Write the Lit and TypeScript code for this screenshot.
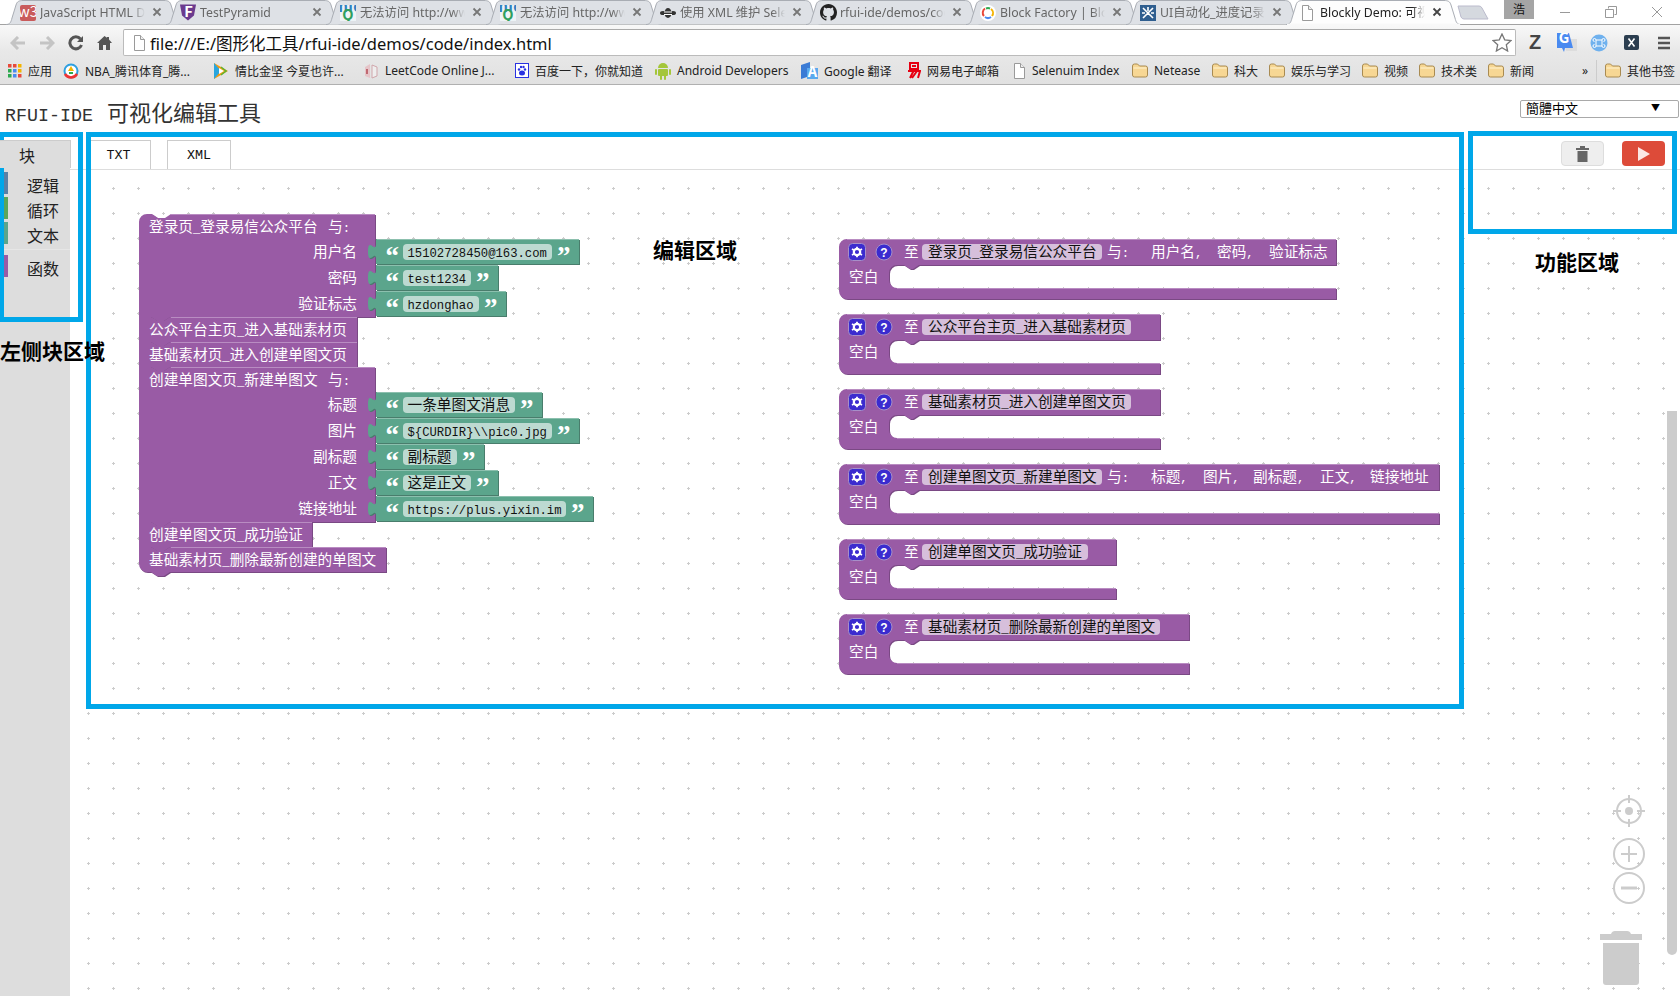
import { LitElement, html, css, svg } from "lit";
import { customElement } from "lit/decorators.js";

const PURPLE = "#995ba5", PURPLE_D = "#7a4984", PURPLE_L = "#b98cc2";
const GREEN = "#5ba58c", GREEN_D = "#497d6c", GREEN_L = "#8cc0ae";

const doc = html`<svg viewBox="0 0 14 16" width="14" height="16"><path d="M2.5.5h6l4 4v11h-10z" fill="#fff" stroke="#9a9a9a"/><path d="M8.5.5v4h4" fill="#eee" stroke="#9a9a9a"/></svg>`;
const folder = html`<svg viewBox="0 0 16 15" width="16" height="15"><path d="M.5 3q0-2 2-2h3l2 2h6q2 0 2 2v7q0 2-2 2h-11q-2 0-2-2z" fill="#f7d794" stroke="#a98b52"/><path d="M1.5 5h13" stroke="#fff3d0"/></svg>`;
const info = html`<svg viewBox="0 0 16 16" width="16" height="16"><rect width="16" height="16" fill="#eef3f6"/><text x="8" y="7" font-size="7" font-weight="700" text-anchor="middle" fill="#2f7fc0" font-family="Liberation Sans">Info</text><text x="8" y="15" font-size="8" font-weight="700" text-anchor="middle" fill="#2f9f5f" font-family="Liberation Sans">Q</text></svg>`;

const tabs = [
  { icon: html`<svg viewBox="0 0 16 16" width="16" height="16"><rect width="16" height="16" rx="2" fill="#c95b5b"/><text x="8" y="12" font-size="10" text-anchor="middle" fill="#fff" font-family="Liberation Sans">w3</text></svg>`, t: "JavaScript HTML DOM" },
  { icon: html`<svg viewBox="0 0 16 16" width="16" height="17"><path d="M0 0h16l-2 11-6 5-6-5z" fill="#6b3a8e"/><text x="8.5" y="12" font-size="12" font-weight="700" text-anchor="middle" fill="#fff" font-family="Liberation Sans">F</text></svg>`, t: "TestPyramid" },
  { icon: info, t: "无法访问 http://www.infoq" },
  { icon: info, t: "无法访问 http://www.infoq" },
  { icon: html`<svg viewBox="0 0 16 16" width="16" height="16"><ellipse cx="8" cy="8" rx="3.5" ry="5" fill="#333"/><ellipse cx="3" cy="8" rx="3" ry="2" fill="#333"/><ellipse cx="13" cy="8" rx="3" ry="2" fill="#333"/><path d="M4 7h8M4 9.5h8" stroke="#fff"/></svg>`, t: "使用 XML 维护 Selenium" },
  { icon: html`<svg viewBox="0 0 16 16" width="17" height="17"><path fill="#222" d="M8 0C3.58 0 0 3.58 0 8c0 3.54 2.29 6.53 5.47 7.59.4.07.55-.17.55-.38 0-.19-.01-.82-.01-1.49-2.01.37-2.53-.49-2.69-.94-.09-.23-.48-.94-.82-1.13-.28-.15-.68-.52-.01-.53.63-.01 1.08.58 1.23.82.72 1.21 1.87.87 2.33.66.07-.52.28-.87.51-1.07-1.78-.2-3.64-.89-3.64-3.95 0-.87.31-1.59.82-2.15-.08-.2-.36-1.02.08-2.12 0 0 .67-.21 2.2.82.64-.18 1.32-.27 2-.27s1.36.09 2 .27c1.53-1.04 2.2-.82 2.2-.82.44 1.1.16 1.92.08 2.12.51.56.82 1.27.82 2.15 0 3.07-1.87 3.75-3.65 3.95.29.25.54.73.54 1.48 0 1.07-.01 1.93-.01 2.2 0 .21.15.46.55.38A8.013 8.013 0 0 0 16 8c0-4.42-3.58-8-8-8z"/></svg>`, t: "rfui-ide/demos/code" },
  { icon: html`<svg viewBox="0 0 16 16" width="16" height="16"><circle cx="8" cy="8" r="8" fill="#fff"/><path d="M5 3.5A5 5 0 0 0 4 11" fill="none" stroke="#e8493a" stroke-width="2"/><path d="M5 12a5 5 0 0 0 6 0" fill="none" stroke="#4a8af0" stroke-width="2"/><path d="M11 4a5 5 0 0 1 1 7" fill="none" stroke="#f4b400" stroke-width="2"/><path d="M6 3.5a5 5 0 0 1 4 0" fill="none" stroke="#2da94f" stroke-width="2"/></svg>`, t: "Block Factory | Blockly" },
  { icon: html`<svg viewBox="0 0 16 16" width="16" height="16"><rect width="16" height="16" fill="#2f5e8f"/><path d="M3 3l10 10M13 3L3 13M8 2v4M2 8h3M11 8h3" stroke="#fff" stroke-width="1.6"/></svg>`, t: "UI自动化_进度记录" },
  { icon: doc, t: "Blockly Demo: 可视化编辑工具", active: true },
];

const bookmarks = [
  { w: 55, t: "应用", icon: html`<svg viewBox="0 0 14 14" width="14" height="14"><g><rect width="3.5" height="3.5" fill="#e8493a"/><rect x="5" width="3.5" height="3.5" fill="#e8493a"/><rect x="10" width="3.5" height="3.5" fill="#f4b400"/><rect y="5" width="3.5" height="3.5" fill="#2da94f"/><rect x="5" y="5" width="3.5" height="3.5" fill="#4a8af0"/><rect x="10" y="5" width="3.5" height="3.5" fill="#f4b400"/><rect y="10" width="3.5" height="3.5" fill="#2da94f"/><rect x="5" y="10" width="3.5" height="3.5" fill="#4a8af0"/><rect x="10" y="10" width="3.5" height="3.5" fill="#e8493a"/></g></svg>` },
  { w: 150, t: "NBA_腾讯体育_腾...", icon: html`<svg viewBox="0 0 16 16" width="16" height="16"><circle cx="8" cy="8" r="6.5" fill="#fff" stroke="#2fa0e0" stroke-width="2"/><path d="M2 11a7 7 0 0 0 12 0" fill="none" stroke="#e33" stroke-width="2.5"/><path d="M5 8l3-5 3 5z" fill="#f4b400"/><path d="M6 10h4" stroke="#2da94f" stroke-width="2"/></svg>` },
  { w: 150, t: "情比金坚 今夏也许...", icon: html`<svg viewBox="0 0 16 18" width="16" height="18"><path d="M1 1l14 8-14 8z" fill="#f39c12"/><path d="M1 1l7 8-7 8z" fill="#2aa6de"/><path d="M6 6l5 3-5 3z" fill="#fff"/><path d="M8 5l5 4-5 4" fill="none" stroke="#5cb531" stroke-width="1.5"/></svg>` },
  { w: 152, t: "LeetCode Online J...", icon: html`<svg viewBox="0 0 16 16" width="16" height="16"><path d="M2 4l5-3v14l-5-2z" fill="#e5c4c8"/><path d="M9 2l5 2v9l-5 2z" fill="#eee" stroke="#d0a6ab"/><path d="M4 6v5" stroke="#b34a55" stroke-width="1.5"/></svg>` },
  { w: 140, t: "百度一下，你就知道", icon: html`<svg viewBox="0 0 14 15" width="14" height="15"><rect x=".5" y=".5" width="13" height="14" fill="#fff" stroke="#2932e1"/><g fill="#2932e1"><ellipse cx="7" cy="10" rx="3" ry="2.5"/><circle cx="4" cy="6.5" r="1.2"/><circle cx="10" cy="6.5" r="1.2"/><circle cx="6" cy="4" r="1.2"/><circle cx="8.5" cy="4" r="1.2"/></g></svg>` },
  { w: 146, t: "Android Developers", icon: html`<svg viewBox="0 0 16 18" width="16" height="18"><g fill="#a4c639"><path d="M3 6a5 5 0 0 1 10 0z"/><rect x="3" y="7" width="10" height="7" rx="1"/><rect y="7" width="2" height="6" rx="1"/><rect x="14" y="7" width="2" height="6" rx="1"/><rect x="5" y="13" width="2" height="5" rx="1"/><rect x="9" y="13" width="2" height="5" rx="1"/></g></svg>` },
  { w: 106, t: "Google 翻译", icon: html`<svg viewBox="0 0 17 17" width="17" height="17"><path d="M0 3l9-3v14l-9 3z" fill="#3a7bd5"/><path d="M6 6h11v11H6z" fill="#5aa9ee"/><text x="11.5" y="15" font-size="10" font-weight="700" text-anchor="middle" fill="#fff" font-family="Liberation Sans">A</text></svg>` },
  { w: 105, t: "网易电子邮箱", icon: html`<svg viewBox="0 0 14 17" width="14" height="17"><path d="M3 1h8v6H3zM5 4h4M1 9h12l-2 7M7 8l-4 8M10 9l-5 7" fill="none" stroke="#e60012" stroke-width="2"/></svg>` },
  { w: 120, t: "Selenuim Index", icon: doc },
  { w: 80, t: "Netease", icon: folder },
  { w: 57, t: "科大", icon: folder },
  { w: 93, t: "娱乐与学习", icon: folder },
  { w: 57, t: "视频", icon: folder },
  { w: 69, t: "技术类", icon: folder },
  { w: 94, t: "新闻", icon: folder },
];

const tools = [
  { t: "逻辑", c: "#5b80a5" },
  { t: "循环", c: "#5ba55b" },
  { t: "文本", c: "#5ba58c" },
];

function txt(s: string, x: number, cy: number, cls: string, anchor = "start") {
  const parts = s.split(/([\x00-\x7f]+)/).filter((p) => p.length);
  return svg`<text x=${x} y=${cy + 5} class=${cls} text-anchor=${anchor}>${parts.map((p) =>
    /^[\x00-\x7f]/.test(p) ? svg`<tspan class="lat">${p}</tspan>` : svg`<tspan>${p}</tspan>`
  )}</text>`;
}

function stmtPath(x: number, y: number, r: number, b: number, hat: boolean, round: boolean) {
  const top = hat
    ? `M${x},${y + 8} a8,8 0 0 1 8,-8 h5 l6,4 h7 l6,-4`
    : `M${x},${y} h12 l6,4 h7 l6,-4`;
  const bottom = round
    ? `V${b} H${x + 31} l-6,4 h-7 l-6,-4 H${x + 8} a8,8 0 0 1 -8,-8 Z`
    : `V${b} H${x + 31} l-6,4 h-7 l-6,-4 H${x} Z`;
  return `${top} H${r} ${bottom}`;
}

function stmt(y: number, right: number, b: number, hat = false, round = false) {
  const r = right - 1;
  const d = stmtPath(139, y, r, b, hat, round);
  return svg`<path d=${d} fill=${PURPLE_D} transform="translate(1,1)"/><path d=${d} fill=${PURPLE}/><path d=${`M${139 + 32},${y + 0.5} H${r}`} stroke=${PURPLE_L} fill="none"/>`;
}

function value(y: number, right: number, text: string) {
  const R = right - 1;
  const d = `M376,${y} H${R} V${y + 25} H376 V${y + 20} c0,-10 -8,8 -8,-7.5 s8,2.5 8,-7.5 Z`;
  return svg`<path d=${d} fill=${GREEN_D} transform="translate(1,1)"/><path d=${d} fill=${GREEN}/>
    <path d=${`M377,${y + 0.5} H${R}`} stroke=${GREEN_L} fill="none"/>
    <text x="385.5" y=${y + 25.5} class="quote">“</text>
    <rect x="403" y=${y + 5} width=${right - 28 - 403} height="16" rx="4" fill="#bddad1"/>
    ${txt(text, 407.5, y + 12.5, "bk")}
    <text x=${right - 23} y=${y + 25.5} class="quote">”</text>`;
}

function def(y: number, rightIn: number, name: string, boxRight: number, params: [string, number][], withYu: boolean) {
  const right = rightIn - 1;
  const d = `M839,${y + 8} a8,8 0 0 1 8,-8 H${right} V${y + 26} H919 l-6,4 h-3 l-6,-4 H897 a8,8 0 0 0 -8,8 V${y + 41} a8,8 0 0 0 8,8 H${right} V${y + 60} H847 a8,8 0 0 1 -8,-8 Z`;
  return svg`<path d=${d} fill=${PURPLE_D} transform="translate(1,1)"/><path d=${d} fill=${PURPLE}/>
    <path d=${`M847,${y + 0.5} H${right}`} stroke=${PURPLE_L} fill="none"/>
    <path d=${`M897,${y + 49.5} H${right}`} stroke=${PURPLE_L} fill="none"/>
    <g transform=${`translate(848,${y + 4})`}>
      <rect x=".5" y=".5" width="17" height="17" rx="4" fill="#3b2bcf" stroke="#a78fc8"/>
      <circle cx="9" cy="9" r="3.2" fill="none" stroke="#fff" stroke-width="2.2"/>
      <path d="M9 3.8v2M9 12.2v2M4 6l1.7 1M12.3 11l1.7 1M4 12l1.7-1M12.3 7L14 6" stroke="#fff" stroke-width="1.8"/>
    </g>
    <g transform=${`translate(884,${y + 13})`}>
      <circle r="8" fill="#3b2bcf" stroke="#a78fc8"/>
      <text y="4.5" text-anchor="middle" class="help">?</text>
    </g>
    ${txt("至", 904, y + 13, "wt")}
    <rect x="922" y=${y + 5} width=${boxRight - 922} height="16" rx="4" fill="#d6bfdb"/>
    ${txt(name, 928, y + 13, "bk")}
    ${withYu ? txt("与:", 1107, y + 13, "wt") : ""}
    ${params.map(([p, x]) => txt(p, x, y + 13, "wt"))}
    ${txt("空白", 849, y + 38, "wt")}`;
}

const defs: [number, number, string, number, [string, number][], boolean][] = [
  [239, 1337, "登录页_登录易信公众平台", 1102, [["用户名,", 1151], ["密码,", 1217], ["验证标志", 1269]], true],
  [314, 1161, "公众平台主页_进入基础素材页", 1131, [], false],
  [389, 1161, "基础素材页_进入创建单图文页", 1131, [], false],
  [464, 1440, "创建单图文页_新建单图文", 1102, [["标题,", 1151], ["图片,", 1203], ["副标题,", 1253], ["正文,", 1320], ["链接地址", 1370]], true],
  [539, 1117, "创建单图文页_成功验证", 1088, [], false],
  [614, 1190, "基础素材页_删除最新创建的单图文", 1160, [], false],
];

@customElement("app-root")
export class AppRoot extends LitElement {
  static styles = css`
    :host { display: flex; flex-direction: column; position: relative; width: 1680px; height: 996px; overflow: hidden; background: #fff; font-family: "Noto Sans", "Noto Sans CJK SC", sans-serif; }
    .strip { display: flex; height: 25px; padding-left: 6px; box-sizing: border-box; position: relative; background: linear-gradient(#fff 0, #fff 24px, #a2a2a2 24px); flex: none; }
    .tab { position: relative; width: 175px; height: 25px; margin-right: -15px; flex: none; font-size: 12.3px; color: #666; }
    .tab.active { z-index: 2; color: #222; }
    .tab svg.shape { position: absolute; inset: 0; }
    .tab .ic { position: absolute; left: 14px; top: 4px; width: 17px; height: 17px; display: flex; align-items: center; }
    .tab .label { position: absolute; left: 34px; top: 3px; width: 105px; height: 19px; line-height: 19px; white-space: nowrap; overflow: hidden; -webkit-mask-image: linear-gradient(90deg, #000 88%, transparent); mask-image: linear-gradient(90deg, #000 88%, transparent); }
    .tab .x { position: absolute; left: 146px; top: 7px; }
    .newtab { flex: none; margin: 5px 0 0 11px; width: 32px; height: 15px; }
    .win { position: absolute; inset: 0 0 auto auto; display: flex; align-items: flex-start; }
    .win .user { width: 30px; height: 19px; margin-right: 8px; background: #a5a5a5; color: #111; font-size: 12px; text-align: center; line-height: 19px; }
    .win .btn { width: 46px; height: 24px; display: flex; align-items: center; justify-content: center; }
    .topbars { background: linear-gradient(#f8f8f8, #e8e8e8 45%, #e1e1e1); border-bottom: 1px solid #b0b0b0; flex: none; }
    .toolbar { height: 32px; box-sizing: border-box; padding-top: 3px; display: flex; align-items: center; }
    .nav { width: 29px; display: flex; justify-content: center; flex: none; }
    .nav:first-child { margin-left: 3px; }
    .omni { width: 1393px; height: 27px; margin-left: 4px; box-sizing: border-box; background: #fff; border: 1px solid #bbb; border-top-color: #aaa; border-radius: 2px; display: flex; align-items: center; padding: 0 3px 0 8px; flex: none; color: #111; }
    .omni .url { margin-left: 4px; flex: 1; font-size: 16.5px; white-space: nowrap; }
    .exts { display: flex; flex: 1; justify-content: space-around; padding: 0 0 0 3px; align-items: center; }
    .ext { width: 32px; display: flex; justify-content: center; }
    .z { font: 700 20px "Liberation Sans", sans-serif; color: #444; }
    .marks { height: 27px; display: flex; align-items: center; padding-left: 8px; font-size: 12px; color: #222; }
    .mark { display: flex; align-items: center; gap: 6px; flex: none; white-space: nowrap; }
    .mark .i { display: flex; align-items: center; }
    .more { margin-left: auto; display: flex; align-items: center; gap: 8px; padding-right: 12px; font-size: 12px; color: #222; }
    .sep { width: 1px; height: 22px; background: #ccc; margin-right: 0; }
    .page { flex: 1; display: flex; flex-direction: column; min-height: 0; }
    .head { height: 55px; flex: none; display: flex; align-items: flex-start; justify-content: space-between; box-sizing: border-box; padding: 11px 1px 0 5px; }
    h1 { margin: 0; display: flex; align-items: baseline; gap: 14px; font: 400 22px/30px "Noto Sans CJK SC", sans-serif; color: #333; }
    h1 .lat { font: 400 18.33px/30px "Liberation Mono", monospace; }
    .lang { width: 159px; height: 18px; margin-top: 4px; box-sizing: border-box; border: 1px solid #a9a9a9; border-radius: 2px; display: flex; align-items: center; justify-content: space-between; padding: 0 18px 2px 5px; font: 400 13px/14px "Noto Sans CJK TC", sans-serif; color: #000; }
    .lang i { font-style: normal; font-size: 9px; }
    .main { flex: 1; display: flex; min-height: 0; }
    .toolbox { width: 70px; flex: none; display: flex; flex-direction: column; background: #ddd; font: 400 16px "Noto Sans CJK SC", sans-serif; color: #222; }
    .tbtab { height: 28px; width: 71px; box-sizing: border-box; border: 1px solid #ccc; border-left: none; border-bottom: none; flex: none; padding-left: 19px; line-height: 28px; position: relative; z-index: 1; background: #ddd; }
    .tree { padding-top: 4px; display: flex; flex-direction: column; gap: 3px; }
    .row { height: 22px; display: flex; align-items: center; }
    .row i { width: 4px; height: 22px; margin-left: 4px; flex: none; }
    .row span { margin-left: 19px; line-height: 22px; padding-top: 4px; }
    .div { height: 1px; background: #e6e6e6; margin: 2px 0 2px; }
    .editor { flex: 1; display: flex; flex-direction: column; min-width: 0; }
    .etabs { height: 30px; box-sizing: border-box; flex: none; display: flex; padding-left: 20px; border-bottom: 1px solid #ddd; }
    .etab { height: 29px; box-sizing: border-box; border: 1px solid #ccc; border-bottom: none; display: flex; align-items: center; justify-content: center; padding-top: 1px; font: 400 13.4px "Liberation Mono", monospace; color: #111; }
    .etab.txt { width: 61px; margin-right: 16px; padding-right: 4px; }
    .etab.xml { width: 64px; }
    .acts { margin-left: auto; display: flex; gap: 18px; padding: 1px 15px 0 0; }
    .act { width: 43px; height: 25px; border-radius: 4px; box-sizing: border-box; display: flex; align-items: center; justify-content: center; padding: 0; }
    .act.del { background: #eee; border: 1px solid #ddd; }
    .act.run { background: #dd4b39; }
    .canvas { flex: 1; position: relative; min-height: 0; }
    .canvas > svg { position: absolute; inset: 0; }
    .bar { position: absolute; left: 1597px; top: 241px; width: 10px; height: 544px; background: #ccc; border-radius: 0 0 5px 5px; }
    text { white-space: pre; font-family: "Noto Sans CJK SC", sans-serif; font-size: 14.67px; }
    .wt { fill: #fff; }
    .bk { fill: #111; }
    .lat { font-family: "Liberation Mono", monospace; font-size: 12.22px; }
    .quote { font-family: "Liberation Serif", serif; font-weight: 700; font-size: 27px; fill: #fff; }
    .help { font-family: "Liberation Sans", sans-serif; font-weight: 700; font-size: 12px; fill: #fff; }
    .frame { position: absolute; box-sizing: border-box; border: 5px solid #00a7e9; pointer-events: none; }
    .f1 { left: -1px; top: 132px; width: 84px; height: 190px; }
    .f2 { left: 86px; top: 132px; width: 1378px; height: 577px; }
    .f3 { left: 1468px; top: 131px; width: 209px; height: 103px; }
    .note { position: absolute; font: 700 21px/28px "Noto Sans CJK SC", sans-serif; color: #000; white-space: nowrap; }
    .n1 { left: 0; top: 336px; }
    .n2 { left: 653px; top: 235px; }
    .n3 { left: 1535px; top: 247px; }
  `;

  render() {
    return html`
      <div class="strip">
        ${tabs.map((t) => html`
          <div class="tab ${t.active ? "active" : ""}">
            <svg class="shape" width="175" height="25" viewBox="0 0 175 25">
              <path d="M0 24.5C4 24.5 5 22 6 18L10 5C11 1.5 13 .5 17 .5H158C162 .5 164 1.5 165 5L169 18C170 22 171 24.5 175 24.5"
                fill=${t.active ? "#fdfdfd" : "#dee1e6"} stroke="#a9adb4"/>
              ${t.active ? svg`<path d="M1 24.5H174" stroke="#f8f8f8" stroke-width="1.5"/>` : ""}
            </svg>
            <span class="ic">${t.icon}</span>
            <span class="label">${t.t}</span>
            <svg class="x" width="10" height="10" viewBox="0 0 10 10"><path d="M1.5 1.5l7 7M8.5 1.5l-7 7" stroke=${t.active ? "#444" : "#777"} stroke-width="1.8"/></svg>
          </div>`)}
        <svg class="newtab" viewBox="0 0 32 15"><path d="M1 1H22Q24 1 25 3L31 14H7Q5 14 4 12Z" fill="#d5d9df" stroke="#bbc"/></svg>
        <div class="win">
          <div class="user">浩</div>
          <div class="btn"><svg width="12" height="12"><path d="M1 6.5h10" stroke="#999"/></svg></div>
          <div class="btn"><svg width="12" height="12"><path d="M3.5 2.5V.5h8v8h-2M.5 3.5h8v8h-8z" fill="none" stroke="#999"/></svg></div>
          <div class="btn"><svg width="12" height="12"><path d="M1 1l10 10M11 1L1 11" stroke="#999"/></svg></div>
        </div>
      </div>
      <div class="topbars">
        <div class="toolbar">
          <div class="nav"><svg width="16" height="14" viewBox="0 0 16 14"><path d="M15 7H3M8 1L2 7l6 6" fill="none" stroke="#c4c4c4" stroke-width="3"/></svg></div>
          <div class="nav"><svg width="16" height="14" viewBox="0 0 16 14"><path d="M1 7h12M8 1l6 6-6 6" fill="none" stroke="#c4c4c4" stroke-width="3"/></svg></div>
          <div class="nav"><svg width="16" height="16" viewBox="0 0 16 16"><path d="M13.5 10A6 6 0 1 1 12.5 4" fill="none" stroke="#555" stroke-width="3"/><path d="M15 1v6H9z" fill="#555"/></svg></div>
          <div class="nav"><svg width="15" height="14" viewBox="0 0 15 14"><path d="M7.5 0L0 7h2v7h4V9h3v5h4V7h2L12 3.5V1h-2v.8z" fill="#555"/></svg></div>
          <div class="omni">
            ${doc}
            <span class="url">file:///E:/图形化工具/rfui-ide/demos/code/index.html</span>
            <svg width="20" height="19" viewBox="0 0 20 19"><path d="M10 1l2.7 5.8 6.3.7-4.7 4.2 1.3 6.3L10 14.8 4.4 18l1.3-6.3L1 7.5l6.3-.7z" fill="#fff" stroke="#777" stroke-width="1.3"/></svg>
          </div>
          <div class="exts">
            <div class="ext z">Z</div>
            <div class="ext"><svg width="20" height="20" viewBox="0 0 20 20"><path d="M7 6h13v12H9z" fill="#ddd"/><path d="M0 0h12l4 15H8l-1 4-2-4H0z" fill="#4a8af0"/><text x="7" y="10" font-size="9" font-weight="700" text-anchor="middle" fill="#fff" font-family="Liberation Sans">G</text></svg></div>
            <div class="ext"><svg width="18" height="18" viewBox="0 0 18 18"><circle cx="9" cy="9" r="8.5" fill="#6fb1ee"/><path d="M6 6h6v6H6zM6 6a1.5 1.5 0 1 0-1.5 1.5M12 6a1.5 1.5 0 1 1 1.5 1.5M6 12a1.5 1.5 0 1 1-1.5-1.5M12 12a1.5 1.5 0 1 0 1.5-1.5" fill="none" stroke="#fff"/></svg></div>
            <div class="ext"><svg width="15" height="15" viewBox="0 0 15 15"><rect width="15" height="15" rx="2" fill="#2c3e50"/><path d="M4.5 3.5l6 8M10.5 3.5l-6 8" stroke="#fff" stroke-width="1.6"/></svg></div>
            <div class="ext"><svg width="14" height="14" viewBox="0 0 14 14"><path d="M1 2h12M1 7h12M1 12h12" stroke="#555" stroke-width="2.6"/></svg></div>
          </div>
        </div>
        <div class="marks">
          ${bookmarks.map((b) => html`<div class="mark" style="width:${b.w}px"><span class="i">${b.icon}</span><span>${b.t}</span></div>`)}
          <div class="more"><span>»</span><span class="sep"></span><span class="mark"><span class="i">${folder}</span><span>其他书签</span></span></div>
        </div>
      </div>
      <div class="page">
        <div class="head">
          <h1><span class="lat">RFUI-IDE</span><span>可视化编辑工具</span></h1>
          <div class="lang"><span>簡體中文</span><i>▼</i></div>
        </div>
        <div class="main">
          <div class="toolbox">
            <div class="tbtab">块</div>
            <div class="tree">
              ${tools.map((r) => html`<div class="row"><i style="background:${r.c}"></i><span>${r.t}</span></div>`)}
              <div class="div"></div>
              <div class="row"><i style="background:#995ba5"></i><span>函数</span></div>
            </div>
          </div>
          <div class="editor">
            <div class="etabs">
              <div class="etab txt">TXT</div>
              <div class="etab xml">XML</div>
              <div class="acts">
                <div class="act del"><svg width="13" height="16" viewBox="0 0 13 16"><path d="M0 2h13v2H0zM4 0h5v2H4zM1.5 5h10v11h-10z" fill="#666"/></svg></div>
                <div class="act run"><svg width="14" height="16" viewBox="0 0 14 16"><path d="M1 1l12 7-12 7z" fill="#fbe7e4"/></svg></div>
              </div>
            </div>
            <div class="canvas">
              <svg width="1610" height="826" viewBox="70 170 1610 826">
                <defs>
                  <pattern id="grid" patternUnits="userSpaceOnUse" width="25" height="25">
                    <path d="M12 13h3v1h-3zM13 12h1v3h-1z" fill="#ccc"/>
                  </pattern>
                </defs>
                <rect x="70" y="170" width="1610" height="826" fill="url(#grid)"/>

                ${stmt(214, 376, 317, true)}
                ${txt("登录页_登录易信公众平台", 149, 227, "wt")}${txt("与:", 328, 227, "wt")}
                ${txt("用户名", 357, 252, "wt", "end")}${txt("密码", 357, 278, "wt", "end")}${txt("验证标志", 357, 304, "wt", "end")}
                ${value(239, 580, "15102728450@163.com")}
                ${value(265, 499, "test1234")}
                ${value(291, 507, "hzdonghao")}
                ${stmt(317, 358, 342)}${txt("公众平台主页_进入基础素材页", 149, 330, "wt")}
                ${stmt(342, 358, 367)}${txt("基础素材页_进入创建单图文页", 149, 355, "wt")}
                ${stmt(367, 376, 522)}
                ${txt("创建单图文页_新建单图文", 149, 380, "wt")}${txt("与:", 328, 380, "wt")}
                ${txt("标题", 357, 405, "wt", "end")}${txt("图片", 357, 431, "wt", "end")}${txt("副标题", 357, 457, "wt", "end")}${txt("正文", 357, 483, "wt", "end")}${txt("链接地址", 357, 509, "wt", "end")}
                ${value(392, 543, "一条单图文消息")}
                ${value(418, 580, "${CURDIR}\\\\pic0.jpg")}
                ${value(444, 485, "副标题")}
                ${value(470, 499, "这是正文")}
                ${value(496, 594, "https://plus.yixin.im")}
                ${stmt(522, 313, 547)}${txt("创建单图文页_成功验证", 149, 535, "wt")}
                ${stmt(547, 387, 572, false, true)}${txt("基础素材页_删除最新创建的单图文", 149, 560, "wt")}

                ${defs.map((d) => def(...d))}

                <g fill="none" stroke="#ccc" stroke-width="2">
                  <circle cx="1629" cy="811" r="12"/>
                  <path d="M1629 795v8M1629 819v8M1613 811h8M1637 811h8"/>
                  <circle cx="1629" cy="854" r="15"/>
                  <path d="M1621 854h16M1629 846v16"/>
                  <circle cx="1629" cy="888" r="15"/>
                  <path d="M1621 888h16" stroke-width="3"/>
                </g>
                <circle cx="1629" cy="811" r="4" fill="#ccc"/>
                <path d="M1600 934h42v6h-42zM1611 934q1-3 4-3h12q3 0 4 3zM1603 943h36v39q0 3-3 3h-30q-3 0-3-3z" fill="#ccc"/>
              </svg>
              <div class="bar"></div>
            </div>
          </div>
        </div>
      </div>
      <div class="frame f1"></div>
      <div class="frame f2"></div>
      <div class="frame f3"></div>
      <div class="note n1">左侧块区域</div>
      <div class="note n2">编辑区域</div>
      <div class="note n3">功能区域</div>
    `;
  }
}
